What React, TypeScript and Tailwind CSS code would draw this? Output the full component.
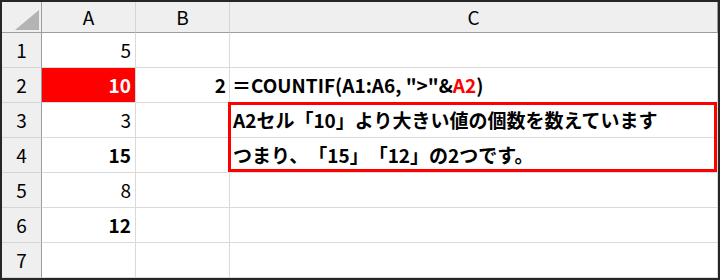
import React from 'react';

const rows = [
  { a: '5', aBold: false },
  { a: '10', aBold: true, red: true },
  { a: '3', aBold: false },
  { a: '15', aBold: true },
  { a: '8', aBold: false },
  { a: '12', aBold: true },
  { a: '', aBold: false },
];

const font = { fontFamily: '"Noto Sans CJK JP", "Noto Sans", sans-serif' };

const App: React.FC = () => {
  return (
    <div
      className="w-[720px] h-[280px] bg-white border-t-2 border-l-2 border-r-2 border-b-2 border-[#262626] overflow-hidden text-black [text-spacing-trim:space-all]"
      style={font}
    >
      <div className="grid grid-cols-[40px_94px_94px_1fr] grid-rows-[31px_repeat(7,35px)] w-[716px] h-[276px]">
        {/* header */}
        <div className="bg-[#efefef] border-r border-b border-[#9d9d9d] flex items-end justify-end pr-[2px] pb-[2px]">
          <svg width="24" height="20" viewBox="0 0 24 20">
            <polygon points="24,0 24,20 0,20" fill="#b4b4b4" />
          </svg>
        </div>
        {['A', 'B', 'C'].map((c, i) => (
          <div
            key={c}
            className={`bg-[#efefef] border-b border-[#9d9d9d] flex items-center justify-center text-[19px] ${
              i < 2 ? 'border-r border-r-[#d5d5d5]' : 'border-r border-r-[#9d9d9d]'
            }`}
          >
            {c}
          </div>
        ))}

        {rows.map((r, i) => (
          <React.Fragment key={i}>
            <div className="bg-[#efefef] border-r border-r-[#9d9d9d] border-b border-b-[#d5d5d5] flex items-center justify-center text-[19px]">
              {i + 1}
            </div>
            <div
              className={`border-r border-b border-[#dadada] flex items-center justify-end pr-[4px] text-[19px] ${
                r.aBold ? 'font-bold' : ''
              } ${r.red ? 'bg-[#ff0000] text-white' : ''}`}
            >
              {r.a}
            </div>
            <div className="border-r border-b border-[#dadada] flex items-center justify-end pr-[3px] text-[19px] font-bold">
              {i === 1 ? '2' : ''}
            </div>
            {i === 1 && (
              <div className="border-r border-b border-[#dadada] flex items-center pl-[2px] text-[19px] font-bold whitespace-nowrap">
                ＝COUNTIF(A1:A6, "&gt;"&amp;<span className="text-[#ff0000]">A2</span>)
              </div>
            )}
            {i === 2 && (
              <div className="row-span-2 relative grid grid-rows-2">
                <div className="border-r border-b border-[#dadada] flex items-center pl-[3px] pt-[1px] text-[19px] font-bold whitespace-nowrap">
                  A2セル「10」より大きい値の個数を数えています
                </div>
                <div className="border-r border-b border-[#dadada] flex items-center pl-[3px] pt-[1px] text-[19px] font-bold whitespace-nowrap">
                  つまり、「15」「12」の2つです。
                </div>
                <div className="absolute -left-[2px] -top-[1px] right-[1px] bottom-[1px] border-[3px] border-[#ff0000] pointer-events-none" />
              </div>
            )}
            {i !== 1 && i !== 2 && i !== 3 && (
              <div className="border-r border-b border-[#dadada]" />
            )}
          </React.Fragment>
        ))}
      </div>
    </div>
  );
};

export default App;
